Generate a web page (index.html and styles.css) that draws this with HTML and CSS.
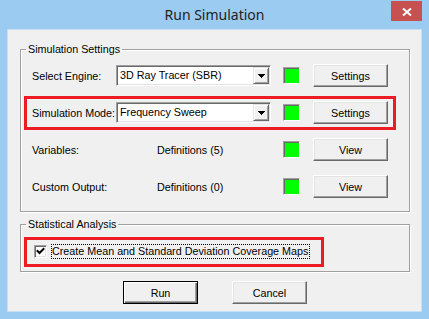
FILE: index.html
```html
<!DOCTYPE html>
<html lang="en">
<head>
    <meta charset="UTF-8">
    <title>Run Simulation</title>
    <link rel="stylesheet" href="styles.css">
</head>
<body>
    <div class="window">
        <div class="titlebar">
            <span class="title">Run Simulation</span>
            <button class="close" title="Close">
                <svg width="31" height="20" viewBox="0 0 31 20"><path d="M12 7.5 L20 14.5 M20 7.5 L12 14.5" stroke="#fff" stroke-width="2" fill="none"/></svg>
            </button>
        </div>
        <div class="client">
            <fieldset class="group">
                <legend>Simulation Settings</legend>
                <div class="group-body settings">
                    <div class="row">
                        <span class="label">Select Engine:</span>
                        <div class="combo">
                            <span class="combo-text">3D Ray Tracer (SBR)</span>
                            <span class="combo-btn"><svg width="7" height="4" viewBox="0 0 7 4"><path d="M0 0h7v1h-1v1h-1v1h-1v1h-1v-1h-1v-1h-1v-1h-1z" fill="#000"/></svg></span>
                        </div>
                        <span class="led"></span>
                        <button class="btn">Settings</button>
                    </div>
                    <div class="row marked">
                        <span class="label">Simulation Mode:</span>
                        <div class="combo">
                            <span class="combo-text">Frequency Sweep</span>
                            <span class="combo-btn"><svg width="7" height="4" viewBox="0 0 7 4"><path d="M0 0h7v1h-1v1h-1v1h-1v1h-1v-1h-1v-1h-1v-1h-1z" fill="#000"/></svg></span>
                        </div>
                        <span class="led"></span>
                        <button class="btn">Settings</button>
                    </div>
                    <div class="row">
                        <span class="label">Variables:</span>
                        <span class="defs">Definitions (5)</span>
                        <span class="led"></span>
                        <button class="btn">View</button>
                    </div>
                    <div class="row">
                        <span class="label">Custom Output:</span>
                        <span class="defs">Definitions (0)</span>
                        <span class="led"></span>
                        <button class="btn">View</button>
                    </div>
                </div>
            </fieldset>
            <fieldset class="group stats">
                <legend>Statistical Analysis</legend>
                <div class="group-body">
                    <label class="check-row marked">
                        <span class="check"><svg width="9" height="9" viewBox="0 0 9 9"><path d="M1.5 4 L3.5 6 L7.5 2" stroke="#000" stroke-width="2" fill="none" stroke-linecap="square"/></svg></span>
                        <span class="focus">Create Mean and Standard Deviation Coverage Maps</span>
                    </label>
                </div>
            </fieldset>
            <div class="actions">
                <button class="btn default">Run</button>
                <button class="btn">Cancel</button>
            </div>
        </div>
    </div>
</body>
</html>
```

FILE: styles.css
```css
body { margin: 0; font-family: "Liberation Sans", Arial, sans-serif; font-size: 10.75px; color: #000; }
.window { width: 429px; height: 319px; background: #9ccbf1; box-sizing: border-box; display: flex; flex-direction: column; }
.titlebar { height: 29px; display: grid; grid-template-columns: 1fr auto 1fr; }
.title { grid-column: 2; align-self: center; font-family: "Noto Sans", sans-serif; font-size: 14px; color: #222; }
.close { grid-column: 3; justify-self: end; align-self: start; margin: 1px 7px 0 0; width: 31px; height: 20px; padding: 0; border: 0; background: #c75050; display: block; }
.close svg { display: block; }
.client { flex: 1; margin: 0 7px 7px; background: #f0f0f0; border: 1px solid #c6dff4; padding: 13px 11px 0 12px; }

.group { margin: 0; padding: 0; min-width: 0; border: 1px solid #a0a0a0; box-shadow: 1px 1px 0 #fff, inset 1px 1px 0 #fff; }
.group legend { margin-left: 5px; padding: 0 2px; line-height: 13px; }
.group-body { padding: 8px 20px 13px 11px; }
.stats { margin-top: 6px; }
.stats .group-body { padding: 13px 0 11px 13px; }

.row { display: flex; align-items: center; height: 23px; position: relative; white-space: nowrap; }
.row + .row { margin-top: 14px; }
.label { width: 84px; flex-shrink: 0; }
.defs { width: 155px; flex-shrink: 0; box-sizing: border-box; padding-left: 41px; }
.combo { width: 155px; height: 21px; flex-shrink: 0; box-sizing: border-box; background: #fff; border: 1px solid; border-color: #a0a0a0 #fff #fff #a0a0a0; box-shadow: inset 1px 1px #696969, inset -1px -1px #e3e3e3; padding: 1px; display: flex; }
.combo-text { flex: 1; padding-left: 2px; line-height: 17px; }
.combo-btn { width: 16px; height: 17px; box-sizing: border-box; background: #f0f0f0; border: 1px solid; border-color: #e3e3e3 #696969 #696969 #e3e3e3; box-shadow: inset 1px 1px #fff, inset -1px -1px #a0a0a0; display: flex; align-items: center; justify-content: center; }
.combo-btn svg { display: block; }
.led { width: 17px; height: 17px; flex-shrink: 0; box-sizing: border-box; margin-left: 12px; background: #00ff00; border: 1px solid; border-color: #a0a0a0 #fff #fff #a0a0a0; box-shadow: inset 1px 1px #696969; }
.row .btn { margin-left: 13px; flex-shrink: 0; }

.btn { width: 75px; height: 23px; padding: 0; font: inherit; color: #000; background: #f0f0f0; border: 1px solid; border-color: #fff #696969 #696969 #fff; box-shadow: inset -1px -1px #a0a0a0, inset 1px 1px #e3e3e3; }
.btn.default { border-color: #000; box-shadow: inset 1px 1px #fff, inset -1px -1px #696969, inset -2px -2px #a0a0a0; }

.check-row { display: inline-flex; align-items: center; height: 15px; position: relative; white-space: nowrap; }
.check { width: 13px; height: 13px; box-sizing: border-box; background: #fff; border: 1px solid; border-color: #a0a0a0 #fff #fff #a0a0a0; box-shadow: inset 1px 1px #696969, inset -1px -1px #e3e3e3; padding: 1px; }
.check svg { display: block; }
.focus { margin-left: 4px; border: 1px dotted #000; padding: 0 1px 0 0; line-height: 13px; }

.marked::after { content: ""; position: absolute; border: 3px solid #ed1c24; pointer-events: none; }
.row.marked::after { left: -8px; right: -7px; top: -5px; bottom: -6px; }
.check-row.marked::after { left: -10px; right: -14px; top: -7px; bottom: -8px; }

.actions { display: flex; justify-content: center; gap: 34px; margin-top: 9px; }
```
